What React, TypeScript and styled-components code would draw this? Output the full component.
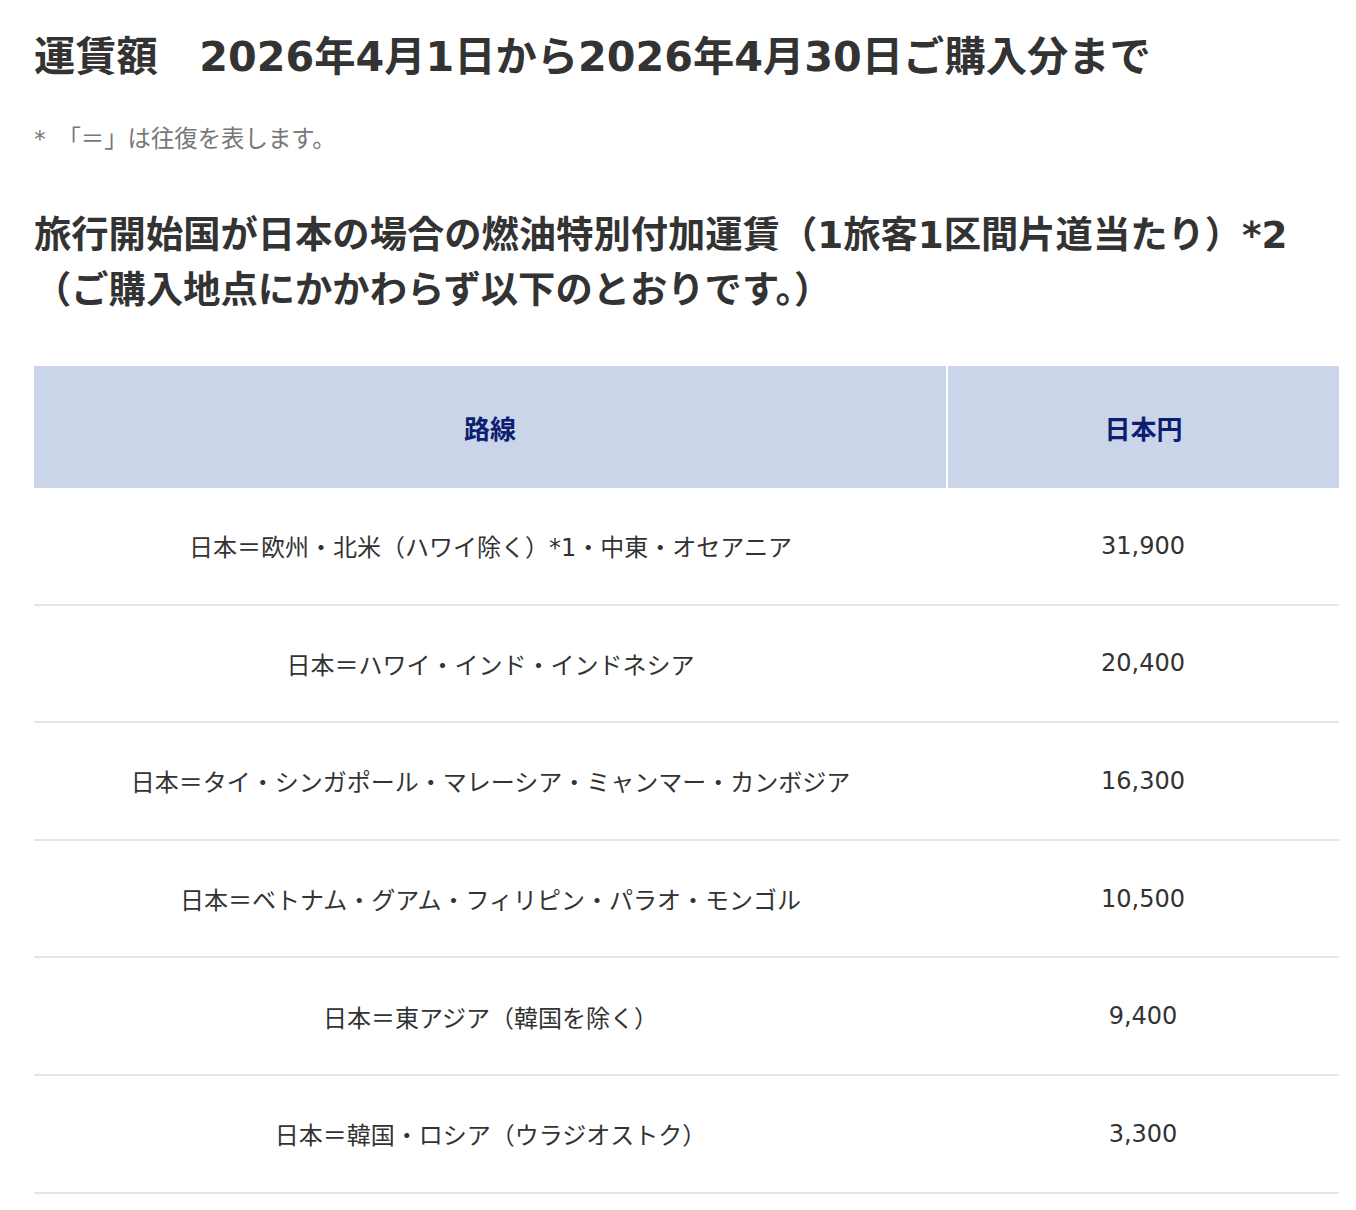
import React from "react";
import styled, { createGlobalStyle } from "styled-components";

const Global = createGlobalStyle`
  html, body { margin: 0; padding: 0; background: #fff; }
  body { font-family: "DejaVu Sans", "Noto Sans CJK JP", sans-serif; color: #333; }
`;

const Page = styled.div`
  padding: 27px 19px 0 34px;
`;

const Title = styled.h1`
  margin: 0;
  font-size: 41.3px;
  line-height: 60px;
  font-weight: 700;
  color: #333;
`;

const Note = styled.p`
  margin: 37px 0 0;
  font-size: 23.4px;
  line-height: 30px;
  color: #777;
`;

const SubHeading = styled.h2`
  margin: 54px 0 0;
  font-size: 37.3px;
  line-height: 55px;
  font-weight: 700;
  color: #333;
`;

const Table = styled.table`
  margin-top: 48px;
  width: 1303px;
  border-collapse: collapse;
  table-layout: fixed;
`;

const HeadCell = styled.th<{ $w: number }>`
  width: ${(p) => p.$w}px;
  height: 122px;
  background: #cad5ea;
  color: #0b1e70;
  font-family: "Noto Sans CJK JP", sans-serif;
  font-size: 26px;
  font-weight: 700;
  text-align: center;
  padding: 0;
  & + & { border-left: 2px solid #fff; }
`;

const Cell = styled.td`
  height: 115.6px;
  padding: 0;
  text-align: center;
  font-size: 24px;
  color: #333;
  border-bottom: 2px solid #e4e4e4;
`;

const rows: [string, string][] = [
  ["日本＝欧州・北米（ハワイ除く）*1・中東・オセアニア", "31,900"],
  ["日本＝ハワイ・インド・インドネシア", "20,400"],
  ["日本＝タイ・シンガポール・マレーシア・ミャンマー・カンボジア", "16,300"],
  ["日本＝ベトナム・グアム・フィリピン・パラオ・モンゴル", "10,500"],
  ["日本＝東アジア（韓国を除く）", "9,400"],
  ["日本＝韓国・ロシア（ウラジオストク）", "3,300"],
];

export default function App() {
  return (
    <>
      <Global />
      <Page>
        <Title>運賃額　2026年4月1日から2026年4月30日ご購入分まで</Title>
        <Note>*　「＝」は往復を表します。</Note>
        <SubHeading>
          旅行開始国が日本の場合の燃油特別付加運賃（1旅客1区間片道当たり）*2
          <br />
          （ご購入地点にかかわらず以下のとおりです。）
        </SubHeading>
        <Table>
          <thead>
            <tr>
              <HeadCell $w={912}>路線</HeadCell>
              <HeadCell $w={391}>日本円</HeadCell>
            </tr>
          </thead>
          <tbody>
            {rows.map(([route, yen]) => (
              <tr key={route}>
                <Cell>{route}</Cell>
                <Cell>{yen}</Cell>
              </tr>
            ))}
          </tbody>
        </Table>
      </Page>
    </>
  );
}
